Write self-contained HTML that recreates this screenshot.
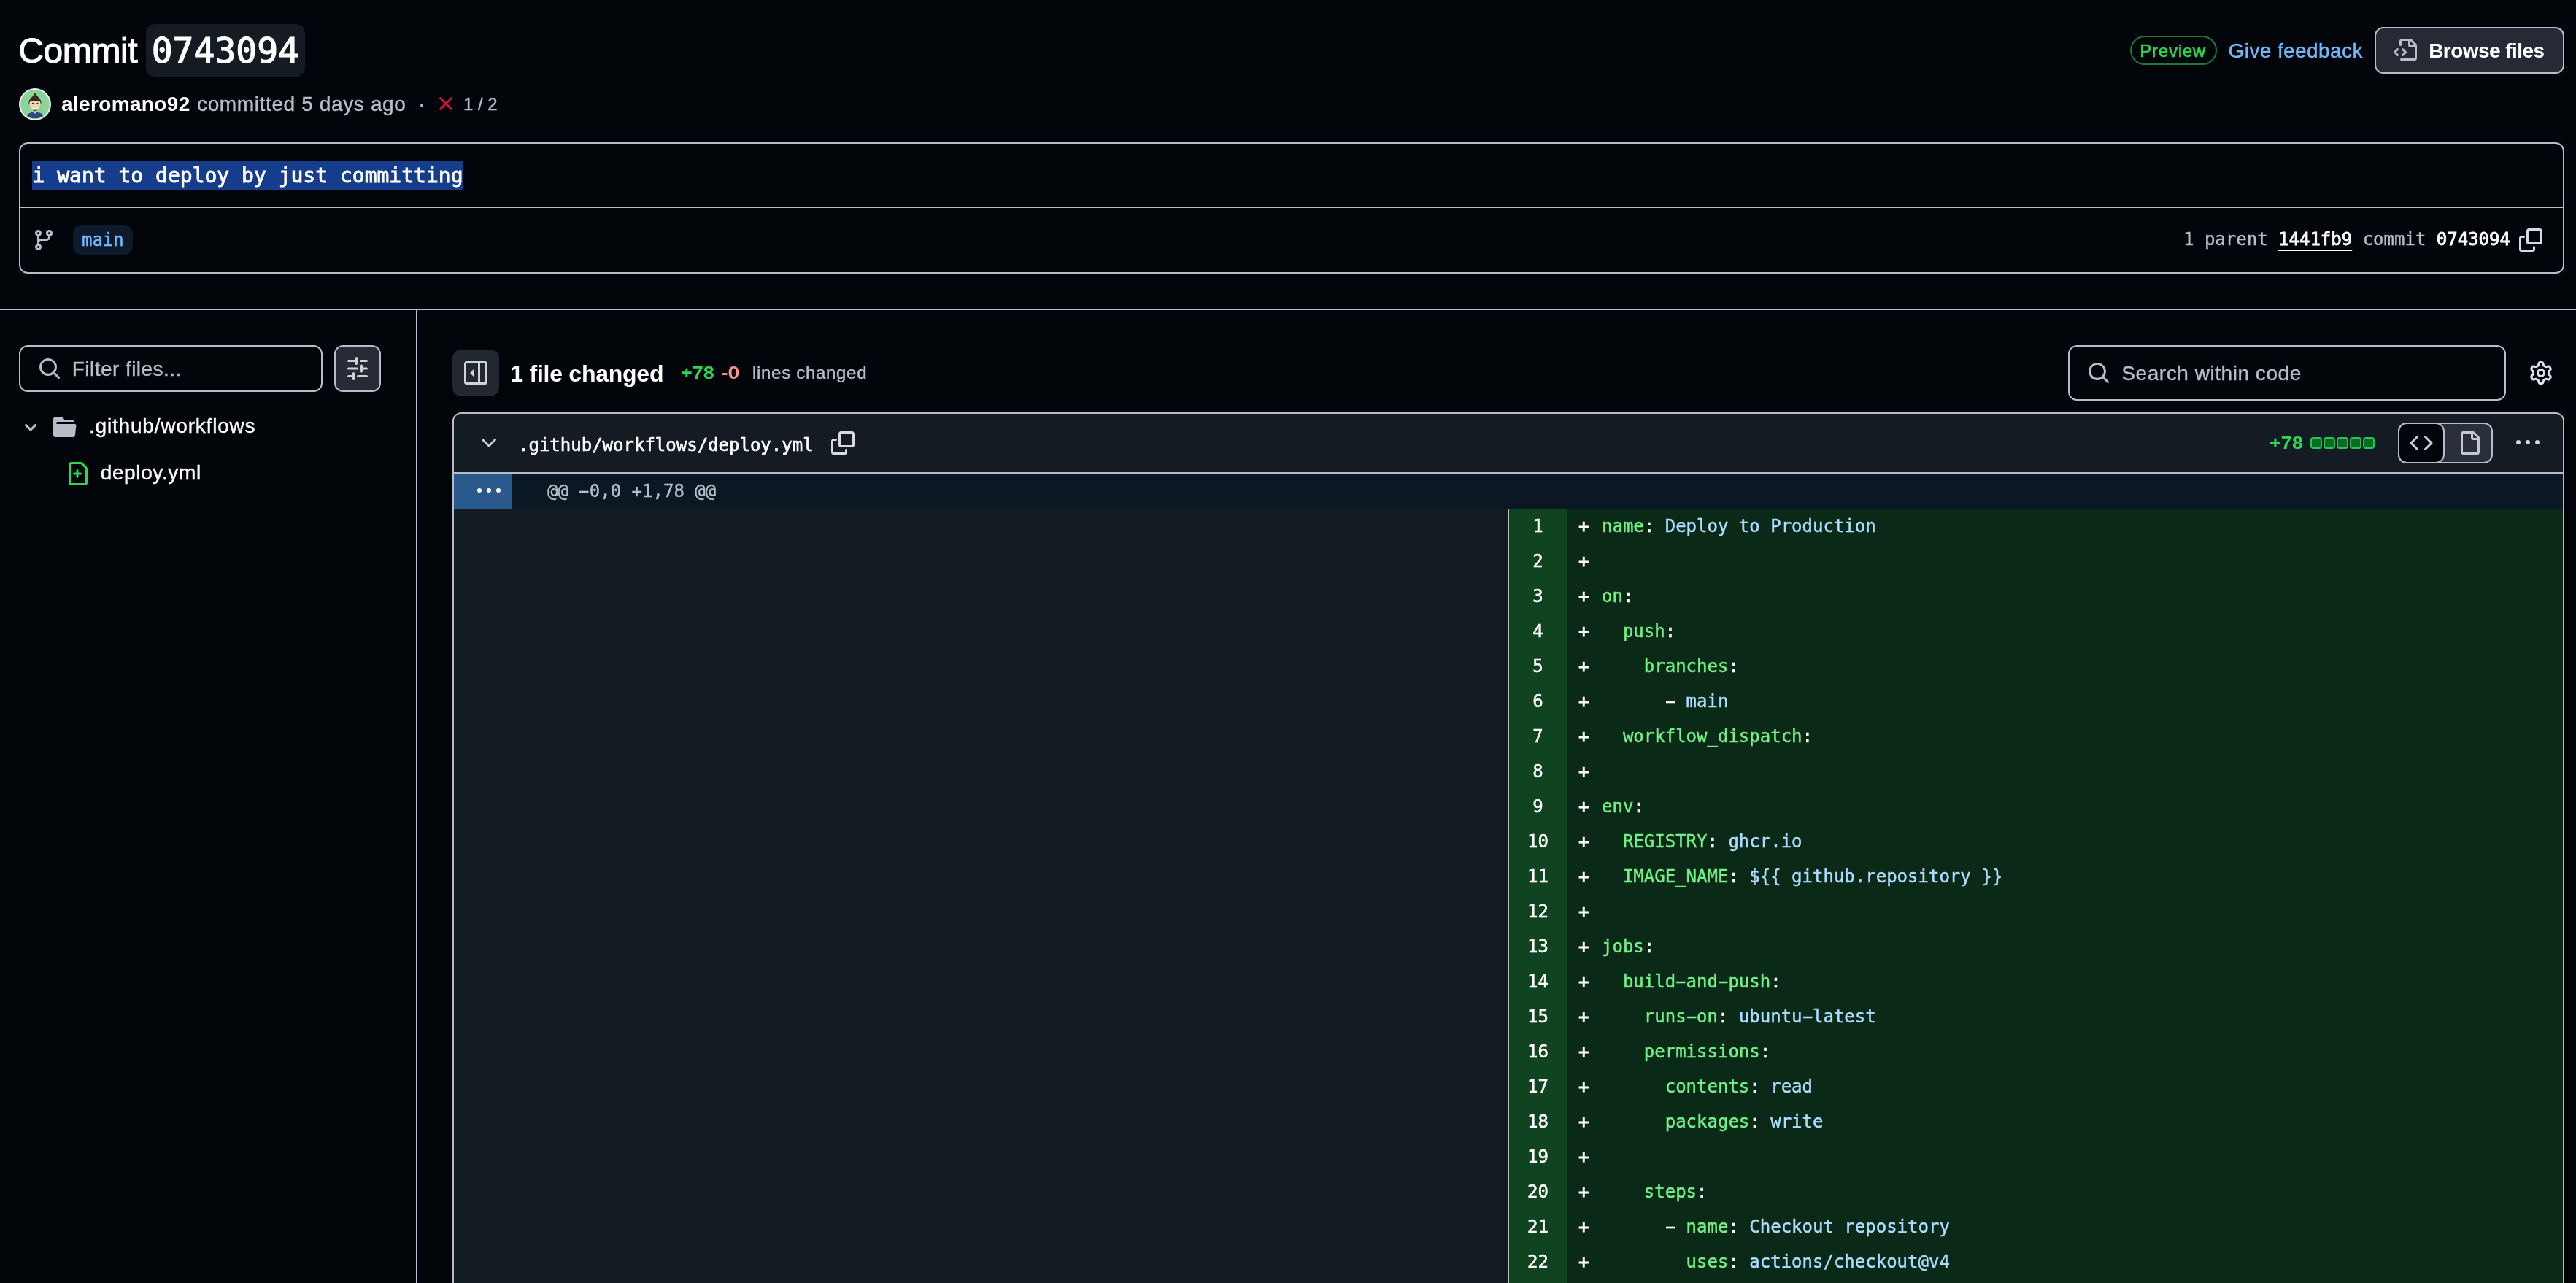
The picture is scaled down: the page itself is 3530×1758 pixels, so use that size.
<!DOCTYPE html>
<html lang="en">
<head>
<meta charset="utf-8">
<title>Commit 0743094</title>
<style>
:root{
  --bg:#010409;
  --muted-bg:#151b23;
  --fg:#ffffff;
  --fg-muted:#b7bdc8;
  --border:#b7bdc8;
  --accent:#74b9ff;
  --green:#2bd853;
  --red:#ff9492;
  --key:#72f088;
  --str:#addcff;
}
*{box-sizing:border-box;margin:0;padding:0}
html,body{width:3530px;height:1758px;overflow:hidden;background:var(--bg)}
body{position:relative;color:var(--fg);font-family:"Liberation Sans",Arial,sans-serif;font-size:28px;-webkit-font-smoothing:antialiased}
#wrap{position:absolute;left:0;top:0;width:3530px;height:1758px;will-change:transform}
.abs{position:absolute}
.t{position:absolute;white-space:nowrap;line-height:1}
.mono{font-family:"DejaVu Sans Mono","Liberation Mono",monospace}
.muted{color:var(--fg-muted)}
svg{position:absolute;display:block;overflow:visible}
b{font-weight:700}

/* ---------- header ---------- */
#h1{left:25.3px;top:45.6px;font-size:48px;font-weight:400;letter-spacing:-0.4px;-webkit-text-stroke:1.1px #fff}
#sha{left:200px;top:33px;width:218px;height:72px;border-radius:12px;background:#151b23}
#shat{left:207.7px;top:44.5px;font-size:48px;-webkit-text-stroke:1.2px #fff}
#avatar{left:26px;top:121px;width:44px;height:44px}
#meta{top:129px;font-size:28px}

#box{left:26px;top:195px;width:3488px;height:180px;border:2px solid var(--border);border-radius:12px}
#boxsep{left:28px;top:283px;width:3484px;height:2px;background:var(--border)}
#sel{left:44px;top:220px;width:590px;height:40px;background:#163c8c}
#msg{left:44.5px;top:226.5px;font-size:28px;font-weight:400;-webkit-text-stroke:0.8px #fff}
#mainbg{left:100px;top:308px;width:82px;height:41px;border-radius:12px;background:#0c1a2c}
#maint{left:112px;top:317px;font-size:24px;color:var(--accent);-webkit-text-stroke-width:0.4px}
#parent{left:2992px;top:316px;font-size:24px;-webkit-text-stroke-width:0.4px}

#hline{left:0;top:423px;width:3530px;height:2px;background:var(--border)}
#vline{left:570px;top:425px;width:2px;height:1333px;background:var(--border)}

/* ---------- sidebar ---------- */
#filter{left:26px;top:473px;width:416px;height:64px;border:2px solid var(--border);border-radius:12px}
#filtert{left:98.8px;top:492px;font-size:28px;color:var(--fg-muted);letter-spacing:0.45px}
#fbtn{left:458px;top:473px;width:64px;height:64px;border:2px solid var(--border);border-radius:12px;background:#262b35}

/* ---------- main top bar ---------- */
#tbtn{left:620px;top:479px;width:64px;height:64px;border-radius:12px;background:#212830}
#fc{left:699.3px;top:495.8px;font-size:32px;font-weight:700;letter-spacing:-0.25px}
#stat{top:499px;font-size:24px}
#search{left:2834px;top:473px;width:600px;height:76px;border:2px solid var(--border);border-radius:12px}
#searcht{left:2907.3px;top:497.7px;font-size:28px;color:var(--fg-muted);letter-spacing:0.55px}

/* ---------- diff ---------- */
#diff{left:620px;top:565px;width:2894px;height:1300px;border:2px solid var(--border);border-radius:12px 12px 0 0;overflow:hidden;background:var(--muted-bg)}
#dhead{left:0;top:0;width:2890px;height:80px;background:var(--muted-bg)}
#dheadsep{left:0;top:80px;width:2890px;height:2px;background:var(--border)}
#hunk{left:0;top:82px;width:2890px;height:48px;background:#0c1724}
#hunknum{left:0;top:82px;width:80px;height:48px;background:#2a5a8d}
#hunkt{left:128px;top:94px;font-size:24px;color:var(--fg-muted);-webkit-text-stroke-width:0.4px}
#split{left:1444px;top:130px;width:2px;height:1200px;background:var(--border)}
#nums{left:1446px;top:130px;width:79px;height:1200px;background:#10431f}
#code{left:1525px;top:130px;width:1365px;height:1200px;background:#0a2917}
.ln{-webkit-text-stroke-width:0.5px;position:absolute;left:1446px;width:79px;height:48px;line-height:48px;text-align:center;font-size:24px;color:#fff}
.mk{-webkit-text-stroke-width:0.8px;position:absolute;left:1541px;height:48px;line-height:48px;font-size:24px;color:#fff}
.cl{-webkit-text-stroke-width:0.45px;position:absolute;left:1573px;height:48px;line-height:48px;font-size:24px;white-space:pre;color:#fff}
.hy{display:inline-block;transform:scaleX(1.9)}
#meta2,#checks,#filtert,#tree1,#tree2,#stat3,#searcht,#feedback{-webkit-text-stroke-width:0.4px}
.k{color:var(--key)}
.s{color:var(--str)}
#fname{left:88px;top:30.5px;font-size:24px;-webkit-text-stroke:0.6px #fff}
#plus78{left:2487.7px;top:28.3px;font-size:24px;font-weight:700;color:var(--green);transform:scaleX(1.13);transform-origin:0 0}
.sq{position:absolute;top:32px;width:16px;height:16px;border-radius:4px;background:#086c25;border:2px solid #28c450}
#seg{left:2664px;top:12px;width:130px;height:56px;border:2px solid var(--border);border-radius:12px;background:#2a303b}
#segsel{left:2664px;top:12px;width:64px;height:56px;border:2px solid var(--border);border-radius:12px;background:var(--bg)}
</style>
</head>
<body>
<div id="wrap">

<!-- header -->
<div class="t" id="h1">Commit</div>
<div class="abs" id="sha"></div>
<div class="t mono" id="shat">0743094</div>

<svg id="avatar" viewBox="0 0 44 44">
  <defs><clipPath id="avc"><circle cx="22" cy="22" r="19.6"/></clipPath></defs>
  <circle cx="22" cy="22" r="22" fill="#e9f6ea"/>
  <circle cx="22" cy="22" r="20" fill="#8fd39c"/>
  <g clip-path="url(#avc)">
    <path d="M10.500 41.500c0-6.500 4.500-9 11.500-9s11.500 2.500 11.500 9z" fill="#2e4a78"/>
    <path d="M19.800 30.500h4.400v2.600l-2.200 1.600-2.200-1.600z" fill="#d5d3ee"/>
    <path d="M19.800 28h4.400v3.200h-4.400z" fill="#5a3a2c"/>
    <path d="M14.600 20c0-4.500 3.200-6.300 7.400-6.300s7.400 1.800 7.400 6.300c0 5.500-3.400 9.600-7.400 9.600s-7.400-4.100-7.400-9.600z" fill="#f6d3b3"/>
    <path d="M16.300 24.500c1.500 1.800 3.500 2.600 5.700 2.600s4.200-.8 5.700-2.600c-.6 3-2.900 5-5.700 5s-5.100-2-5.700-5z" fill="#f3ecdc"/>
    <path d="M13.700 22.500c-1.200-5.800 2.200-9.200 5-11.600l3.300-4.700 3.300 4.700c2.800 2.400 6.200 5.800 5 11.600-.7-3-1.600-4.700-2.800-5.600-1.600.9-3.400 1.200-5.500 1.200s-3.900-.3-5.500-1.200c-1.200.9-2.100 2.600-2.800 5.600z" fill="#3a2a26"/>
    <circle cx="18.900" cy="20.800" r="1" fill="#2a1a14"/>
    <circle cx="25.400" cy="20.800" r="1" fill="#2a1a14"/>
  </g>
</svg>

<div class="t" id="meta" style="left:84px;letter-spacing:0.35px"><b>aleromano92</b></div>
<div class="t muted" id="meta2" style="left:270px;top:129px;font-size:28px;letter-spacing:0.63px">committed 5 days ago</div>
<div class="t muted" id="dot" style="left:573px;top:129px;font-size:28px">·</div>
<svg id="xicon" style="left:595px;top:126px;width:32px;height:32px" viewBox="0 0 16 16"><path fill="#cb1634" d="M3.72 3.72a.75.75 0 0 1 1.06 0L8 6.94l3.22-3.22a.749.749 0 0 1 1.275.326.749.749 0 0 1-.215.734L9.06 8l3.22 3.22a.749.749 0 0 1-.326 1.275.749.749 0 0 1-.734-.215L8 9.06l-3.22 3.22a.751.751 0 0 1-1.042-.018.751.751 0 0 1-.018-1.042L6.94 8 3.72 4.78a.75.75 0 0 1 0-1.06Z"/></svg>
<div class="t muted" id="checks" style="left:635px;top:131px;font-size:24px">1 / 2</div>


<div class="abs" id="pill" style="left:2919px;top:49px;width:119px;height:40px;border:2px solid #197b35;border-radius:20px"></div>
<div class="t" id="pillt" style="left:2932.3px;top:57.5px;letter-spacing:0.75px;font-size:24px;color:var(--green);-webkit-text-stroke:0.6px var(--green)">Preview</div>
<div class="t" id="feedback" style="left:3053.6px;top:55.6px;font-size:28px;color:var(--accent);letter-spacing:0.4px">Give feedback</div>
<div class="abs" id="bbtn" style="left:3254px;top:37px;width:260px;height:64px;border:2px solid var(--border);border-radius:12px;background:#252a34"></div>
<svg id="bicon" style="left:3280px;top:53px;width:32px;height:32px" viewBox="0 0 16 16"><path fill="#b7bdc8" d="M4 1.750C4 .784 4.784 0 5.750 0h5.586c.464 0 .909.184 1.237.513l2.914 2.914c.329.328.513.773.513 1.237v8.586A1.750 1.750 0 0 1 14.250 15h-9a.75.75 0 0 1 0-1.500h9a.25.25 0 0 0 .25-.25V6h-2.750A1.750 1.750 0 0 1 10 4.250V1.500H5.750a.25.25 0 0 0-.25.25v2.500a.75.75 0 0 1-1.500 0Zm1.720 4.970a.75.75 0 0 1 1.060 0l2 2a.75.75 0 0 1 0 1.060l-2 2a.749.749 0 0 1-1.275-.326.749.749 0 0 1 .215-.734l1.470-1.470-1.470-1.470a.75.75 0 0 1 0-1.060ZM3.280 7.780 1.810 9.250l1.470 1.470a.751.751 0 0 1-.018 1.042.751.751 0 0 1-1.042.018l-2-2a.75.75 0 0 1 0-1.060l2-2a.751.751 0 0 1 1.042.018.751.751 0 0 1 .018 1.042Zm8.220-6.218V4.250c0 .138.112.25.25.25h2.688l-.011-.013-2.914-2.914-.013-.011Z"/></svg>
<div class="t" id="bbtnt" style="left:3328.2px;top:55.6px;font-size:28px;font-weight:700;letter-spacing:-0.55px">Browse files</div>

<div class="abs" id="box"></div>
<div class="abs" id="boxsep"></div>
<div class="abs" id="sel"></div>
<div class="t mono" id="msg">i want to deploy by just committing</div>

<svg id="branch" style="left:44px;top:313px;width:32px;height:32px" viewBox="0 0 16 16"><path fill="#b7bdc8" d="M9.5 3.25a2.25 2.25 0 1 1 3 2.122V6A2.5 2.5 0 0 1 10 8.5H6a1 1 0 0 0-1 1v1.128a2.251 2.251 0 1 1-1.5 0V5.372a2.25 2.25 0 1 1 1.5 0v1.836A2.493 2.493 0 0 1 6 7h4a1 1 0 0 0 1-1v-.628A2.25 2.25 0 0 1 9.5 3.25Zm-6 0a.75.75 0 1 0 1.5 0 .75.75 0 0 0-1.5 0Zm8.25-.75a.75.75 0 1 0 0 1.5.75.75 0 0 0 0-1.5ZM4.25 12a.75.75 0 1 0 0 1.5.75.75 0 0 0 0-1.5Z"/></svg>
<div class="abs" id="mainbg"></div>
<div class="t mono" id="maint">main</div>

<div class="t mono" id="parent"><span class="muted">1 parent </span><span style="text-decoration:underline;text-underline-offset:6px;text-decoration-thickness:2px;-webkit-text-stroke-width:0.8px">1441fb9</span><span class="muted"> commit </span><span style="-webkit-text-stroke-width:0.8px">0743094</span></div>
<svg id="copy1" style="left:3452px;top:313px;width:32px;height:32px" viewBox="0 0 16 16"><path fill="#d6dbe3" d="M0 6.75C0 5.784.784 5 1.75 5h1.5a.75.75 0 0 1 0 1.5h-1.5a.25.25 0 0 0-.25.25v7.5c0 .138.112.25.25.25h7.5a.25.25 0 0 0 .25-.25v-1.5a.75.75 0 0 1 1.5 0v1.5A1.75 1.75 0 0 1 9.25 16h-7.5A1.75 1.75 0 0 1 0 14.25Z"/><path fill="#d6dbe3" d="M5 1.75C5 .784 5.784 0 6.75 0h7.5C15.216 0 16 .784 16 1.75v7.5A1.75 1.75 0 0 1 14.25 11h-7.5A1.75 1.75 0 0 1 5 9.25Zm1.75-.25a.25.25 0 0 0-.25.25v7.5c0 .138.112.25.25.25h7.5a.25.25 0 0 0 .25-.25v-7.5a.25.25 0 0 0-.25-.25Z"/></svg>

<div class="abs" id="hline"></div>
<div class="abs" id="vline"></div>


<!-- sidebar -->
<div class="abs" id="filter"></div>
<svg id="fsearch" style="left:52px;top:489px;width:32px;height:32px" viewBox="0 0 16 16"><path fill="#b7bdc8" d="M10.68 11.74a6 6 0 0 1-7.922-8.982 6 6 0 0 1 8.982 7.922l3.04 3.04a.749.749 0 0 1-.326 1.275.749.749 0 0 1-.734-.215ZM11.5 7a4.499 4.499 0 1 0-8.997 0A4.499 4.499 0 0 0 11.5 7Z"/></svg>
<div class="t" id="filtert">Filter files...</div>
<div class="abs" id="fbtn"></div>
<svg id="fbtni" style="left:474px;top:489px;width:32px;height:32px" viewBox="0 0 16 16"><path fill="#ced3db" d="M15 2.75a.75.75 0 0 1-.75.75h-4a.75.75 0 0 1 0-1.500h4a.75.75 0 0 1 .75.75Zm-8.5.75v1.250a.75.75 0 0 0 1.500 0v-4a.75.75 0 0 0-1.500 0V2H1.750a.75.75 0 0 0 0 1.500H6.500Zm1.250 5.250a.75.75 0 0 0 0-1.500h-6a.75.75 0 0 0 0 1.500h6ZM15 8a.75.75 0 0 1-.75.75H11.500V10a.75.75 0 1 1-1.500 0V6a.75.75 0 0 1 1.500 0v1.250h2.750A.75.75 0 0 1 15 8Zm-9 5.250v-2a.75.75 0 0 0-1.500 0v1.250H1.750a.75.75 0 0 0 0 1.500H4.500v1.250a.75.75 0 0 0 1.500 0v-2Zm9 0a.75.75 0 0 1-.75.75h-6a.75.75 0 0 1 0-1.500h6a.75.75 0 0 1 .75.75Z"/></svg>

<svg id="chev1" style="left:30px;top:573px;width:24px;height:24px" viewBox="0 0 12 12"><path fill="#b7bdc8" d="M6 8.825c-.2 0-.4-.1-.5-.2l-3.300-3.300c-.3-.3-.3-.8 0-1.100.3-.3.800-.3 1.100 0l2.700 2.700 2.700-2.700c.3-.3.800-.3 1.100 0 .3.300.3.800 0 1.100l-3.200 3.200c-.2.200-.4.300-.6.300Z"/></svg>
<svg id="folder" style="left:73px;top:569px;width:32px;height:32px" viewBox="0 0 16 16"><path fill="#b7bdc8" d="M.513 1.513A1.750 1.750 0 0 1 1.750 1h3.500c.55 0 1.070.26 1.400.7l.9 1.200a.25.25 0 0 0 .2.100H13a1 1 0 0 1 1 1v.5H2.750a.75.75 0 0 0 0 1.500h11.978a1 1 0 0 1 .994 1.117L15 13.250A1.750 1.750 0 0 1 13.250 15H1.750A1.750 1.750 0 0 1 0 13.250V2.750c0-.464.184-.910.513-1.237Z"/></svg>
<div class="t" id="tree1" style="left:122px;top:570.2px;font-size:28px;letter-spacing:0.8px">.github/workflows</div>
<svg id="fileadd" style="left:90.3px;top:633px;width:32px;height:32px" viewBox="0 0 16 16"><path fill="#2bd853" d="M2 1.750C2 .784 2.784 0 3.750 0h6.586c.464 0 .909.184 1.237.513l2.914 2.914c.329.328.513.773.513 1.237v9.586A1.750 1.750 0 0 1 13.250 16h-9.500A1.750 1.750 0 0 1 2 14.250Zm1.750-.25a.25.25 0 0 0-.25.25v12.500c0 .138.112.25.25.25h9.500a.25.25 0 0 0 .25-.25V4.664a.25.25 0 0 0-.073-.177l-2.914-2.914a.25.25 0 0 0-.177-.073ZM8 5a.75.75 0 0 1 .75.75v1.500h1.500a.75.75 0 0 1 0 1.500h-1.500v1.500a.75.75 0 0 1-1.500 0v-1.500h-1.500a.75.75 0 0 1 0-1.500h1.500v-1.500A.75.75 0 0 1 8 5Z"/></svg>
<div class="t" id="tree2" style="left:137.7px;top:634.2px;font-size:28px;letter-spacing:0.63px">deploy.yml</div>

<!-- main top bar -->
<div class="abs" id="tbtn"></div>
<svg id="tbtni" style="left:636px;top:495px;width:32px;height:32px" viewBox="0 0 16 16"><path fill="#ced3db" d="m4.177 7.823 2.396-2.396A.25.25 0 0 1 7 5.604v4.792a.25.25 0 0 1-.427.177L4.177 8.177a.25.25 0 0 1 0-.354Z"/><path fill="#ced3db" d="M0 1.750C0 .784.784 0 1.750 0h12.500C15.216 0 16 .784 16 1.750v12.500A1.750 1.750 0 0 1 14.250 16H1.750A1.750 1.750 0 0 1 0 14.250Zm1.750-.25a.25.25 0 0 0-.25.25v12.500c0 .138.112.25.25.25H9.500v-13Zm12.500 13a.25.250 0 0 0 .25-.25V1.750a.25.25 0 0 0-.25-.25H11v13Z"/></svg>
<div class="t" id="fc">1 file changed</div>
<div class="t" id="stat" style="left:933px;color:var(--green);font-weight:700;transform:scaleX(1.123);transform-origin:0 0">+78</div>
<div class="t" id="stat2" style="left:988px;top:499px;font-size:24px;color:var(--red);font-weight:700;transform:scaleX(1.19);transform-origin:0 0">-0</div>
<div class="t muted" id="stat3" style="left:1031px;top:499px;font-size:24px;letter-spacing:0.7px">lines changed</div>
<div class="abs" id="search"></div>
<svg id="ssearch" style="left:2860px;top:495px;width:32px;height:32px" viewBox="0 0 16 16"><path fill="#b7bdc8" d="M10.68 11.74a6 6 0 0 1-7.922-8.982 6 6 0 0 1 8.982 7.922l3.04 3.04a.749.749 0 0 1-.326 1.275.749.749 0 0 1-.734-.215ZM11.5 7a4.499 4.499 0 1 0-8.997 0A4.499 4.499 0 0 0 11.5 7Z"/></svg>
<div class="t" id="searcht">Search within code</div>
<svg id="gear" style="left:3466px;top:495px;width:32px;height:32px" viewBox="0 0 16 16"><path fill="#dde1e8" d="M8 0a8.200 8.200 0 0 1 .701.031C9.444.095 9.990.645 10.160 1.290l.288 1.107c.018.066.079.158.212.224.231.114.454.243.668.386.123.082.233.090.299.071l1.103-.303c.644-.176 1.392.021 1.820.630.270.385.506.792.704 1.218.315.675.111 1.422-.364 1.891l-.814.806c-.049.048-.098.147-.088.294.016.257.016.515 0 .772-.01.147.038.246.088.294l.814.806c.475.469.679 1.216.364 1.891a7.977 7.977 0 0 1-.704 1.217c-.428.610-1.176.807-1.820.630l-1.102-.302c-.067-.019-.177-.011-.300.071a5.909 5.909 0 0 1-.668.386c-.133.066-.194.158-.211.224l-.290 1.106c-.168.646-.715 1.196-1.458 1.260a8.006 8.006 0 0 1-1.402 0c-.743-.064-1.289-.614-1.458-1.260l-.289-1.106c-.018-.066-.079-.158-.212-.224a5.738 5.738 0 0 1-.668-.386c-.123-.082-.233-.090-.299-.071l-1.103.303c-.644.176-1.392-.021-1.820-.630a8.120 8.120 0 0 1-.704-1.218c-.315-.675-.111-1.422.363-1.891l.815-.806c.050-.048.098-.147.088-.294a6.214 6.214 0 0 1 0-.772c.010-.147-.038-.246-.088-.294l-.815-.806C.635 6.045.431 5.298.746 4.623a7.920 7.920 0 0 1 .704-1.217c.428-.610 1.176-.807 1.820-.630l1.102.302c.067.019.177.011.300-.071.214-.143.437-.272.668-.386.133-.066.194-.158.211-.224l.290-1.106C6.009.645 6.556.095 7.299.030 7.530.010 7.764 0 8 0Zm-.571 1.525c-.036.003-.108.036-.137.146l-.289 1.105c-.147.561-.549.967-.998 1.189-.173.086-.340.183-.500.290-.417.278-.970.423-1.529.270l-1.103-.303c-.109-.030-.175.016-.195.045-.220.312-.412.644-.573.990-.014.031-.021.110.059.190l.815.806c.411.406.562.957.530 1.456a4.709 4.709 0 0 0 0 .582c.032.499-.119 1.050-.530 1.456l-.815.806c-.081.080-.073.159-.059.190.162.346.353.677.573.989.020.030.085.076.195.046l1.102-.303c.560-.153 1.113-.008 1.530.270.161.107.328.204.501.290.447.222.850.629.997 1.189l.289 1.105c.029.109.101.143.137.146a6.600 6.600 0 0 0 1.142 0c.036-.003.108-.036.137-.146l.289-1.105c.147-.561.549-.967.998-1.189.173-.086.340-.183.500-.290.417-.278.970-.423 1.529-.270l1.103.303c.109.029.175-.016.195-.045.220-.313.411-.644.573-.990.014-.031.021-.110-.059-.190l-.815-.806c-.411-.406-.562-.957-.530-1.456a4.709 4.709 0 0 0 0-.582c-.032-.499.119-1.050.530-1.456l.815-.806c.081-.080.073-.159.059-.190a6.464 6.464 0 0 0-.573-.989c-.020-.030-.085-.076-.195-.046l-1.102.303c-.560.153-1.113.008-1.530-.270a4.440 4.440 0 0 0-.501-.290c-.447-.222-.850-.629-.997-1.189l-.289-1.105c-.029-.110-.101-.143-.137-.146a6.600 6.600 0 0 0-1.142 0ZM11 8a3 3 0 1 1-6 0 3 3 0 0 1 6 0ZM9.500 8a1.500 1.500 0 1 0-3.001.001A1.500 1.500 0 0 0 9.500 8Z"/></svg>

<!-- diff -->
<div class="abs" id="diff">
  <div class="abs" id="dhead"></div>
  <div class="abs" id="dheadsep"></div>
  <svg id="chev2" style="left:31.7px;top:24px;width:32px;height:32px" viewBox="0 0 16 16"><path fill="#c9ced6" d="M12.780 5.220a.749.749 0 0 1 0 1.060l-4.250 4.250a.749.749 0 0 1-1.060 0L3.220 6.280a.749.749 0 1 1 1.060-1.060L8 8.939l3.720-3.719a.749.749 0 0 1 1.060 0Z"/></svg>
  <div class="t mono" id="fname">.github/workflows/deploy.yml</div>
  <svg id="copy2" style="left:517px;top:24px;width:32px;height:32px" viewBox="0 0 16 16"><path fill="#d6dbe3" d="M0 6.750C0 5.784.784 5 1.750 5h1.500a.75.75 0 0 1 0 1.500h-1.500a.25.25 0 0 0-.25.25v7.500c0 .138.112.25.25.25h7.500a.25.25 0 0 0 .25-.25v-1.500a.75.75 0 0 1 1.500 0v1.500A1.750 1.750 0 0 1 9.250 16h-7.500A1.750 1.750 0 0 1 0 14.250Z"/><path fill="#d6dbe3" d="M5 1.750C5 .784 5.784 0 6.750 0h7.500C15.216 0 16 .784 16 1.750v7.500A1.750 1.750 0 0 1 14.250 11h-7.500A1.750 1.750 0 0 1 5 9.250Zm1.750-.25a.25.25 0 0 0-.25.25v7.500c0 .138.112.25.25.25h7.500a.25.25 0 0 0 .25-.25v-7.500a.25.25 0 0 0-.25-.25Z"/></svg>
  <div class="t" id="plus78">+78</div>
  <div class="sq" style="left:2544px"></div><div class="sq" style="left:2562px"></div><div class="sq" style="left:2580px"></div><div class="sq" style="left:2598px"></div><div class="sq" style="left:2616px"></div>
  <div class="abs" id="seg"></div>
  <div class="abs" id="segsel"></div>
  <svg id="codei" style="left:2679.5px;top:24px;width:32px;height:32px" viewBox="0 0 16 16"><path fill="#c9ced6" d="m11.280 3.220 4.250 4.250a.75.75 0 0 1 0 1.060l-4.250 4.250a.749.749 0 0 1-1.275-.326.749.749 0 0 1 .215-.734L13.940 8l-3.720-3.720a.749.749 0 0 1 .326-1.275.749.749 0 0 1 .734.215Zm-6.560 0a.751.751 0 0 1 1.042.018.751.751 0 0 1 .018 1.042L2.060 8l3.720 3.720a.749.749 0 0 1-.326 1.275.749.749 0 0 1-.734-.215L.470 8.530a.75.75 0 0 1 0-1.060Z"/></svg>
  <svg id="filei" style="left:2746px;top:24px;width:32px;height:32px" viewBox="0 0 16 16"><path fill="#c3c8d1" d="M2 1.750C2 .784 2.784 0 3.750 0h6.586c.464 0 .909.184 1.237.513l2.914 2.914c.329.328.513.773.513 1.237v9.586A1.750 1.750 0 0 1 13.250 16h-9.500A1.750 1.750 0 0 1 2 14.250Zm1.750-.25a.25.25 0 0 0-.25.25v12.500c0 .138.112.25.25.25h9.500a.25.25 0 0 0 .25-.25V6h-2.750A1.750 1.750 0 0 1 9 4.250V1.500Zm6.750.062V4.250c0 .138.112.25.25.25h2.688l-.011-.013-2.914-2.914-.013-.011Z"/></svg>
  <svg id="kebab" style="left:2826px;top:24px;width:32px;height:32px" viewBox="0 0 16 16"><path fill="#d5dae2" d="M8 9a1.500 1.500 0 1 0 0-3 1.500 1.500 0 0 0 0 3ZM1.500 9a1.500 1.500 0 1 0 0-3 1.500 1.500 0 0 0 0 3Zm13 0a1.500 1.500 0 1 0 0-3 1.500 1.500 0 0 0 0 3Z"/></svg>

  <div class="abs" id="hunk"></div>
  <div class="abs" id="hunknum"></div>
  <svg id="hdots" style="left:32px;top:90px;width:32px;height:32px" viewBox="0 0 16 16"><path fill="#fff" d="M8 9a1.500 1.500 0 1 0 0-3 1.500 1.500 0 0 0 0 3ZM1.500 9a1.500 1.500 0 1 0 0-3 1.500 1.500 0 0 0 0 3Zm13 0a1.500 1.500 0 1 0 0-3 1.500 1.500 0 0 0 0 3Z"/></svg>
  <div class="t mono" id="hunkt">@@ <span class="hy">-</span>0,0 +1,78 @@</div>

  <div class="abs" id="split"></div>
  <div class="abs" id="nums"></div>
  <div class="abs" id="code"></div>
<div class="ln mono" style="top:130px">1</div><div class="mk mono" style="top:130px">+</div><div class="cl mono" style="top:130px"><span class="k">name</span>: <span class="s">Deploy to Production</span></div>
  <div class="ln mono" style="top:178px">2</div><div class="mk mono" style="top:178px">+</div><div class="cl mono" style="top:178px"></div>
  <div class="ln mono" style="top:226px">3</div><div class="mk mono" style="top:226px">+</div><div class="cl mono" style="top:226px"><span class="k">on</span>:</div>
  <div class="ln mono" style="top:274px">4</div><div class="mk mono" style="top:274px">+</div><div class="cl mono" style="top:274px">  <span class="k">push</span>:</div>
  <div class="ln mono" style="top:322px">5</div><div class="mk mono" style="top:322px">+</div><div class="cl mono" style="top:322px">    <span class="k">branches</span>:</div>
  <div class="ln mono" style="top:370px">6</div><div class="mk mono" style="top:370px">+</div><div class="cl mono" style="top:370px">      <span class="hy">-</span> <span class="s">main</span></div>
  <div class="ln mono" style="top:418px">7</div><div class="mk mono" style="top:418px">+</div><div class="cl mono" style="top:418px">  <span class="k">workflow_dispatch</span>:</div>
  <div class="ln mono" style="top:466px">8</div><div class="mk mono" style="top:466px">+</div><div class="cl mono" style="top:466px"></div>
  <div class="ln mono" style="top:514px">9</div><div class="mk mono" style="top:514px">+</div><div class="cl mono" style="top:514px"><span class="k">env</span>:</div>
  <div class="ln mono" style="top:562px">10</div><div class="mk mono" style="top:562px">+</div><div class="cl mono" style="top:562px">  <span class="k">REGISTRY</span>: <span class="s">ghcr.io</span></div>
  <div class="ln mono" style="top:610px">11</div><div class="mk mono" style="top:610px">+</div><div class="cl mono" style="top:610px">  <span class="k">IMAGE_NAME</span>: <span class="s">${{ github.repository }}</span></div>
  <div class="ln mono" style="top:658px">12</div><div class="mk mono" style="top:658px">+</div><div class="cl mono" style="top:658px"></div>
  <div class="ln mono" style="top:706px">13</div><div class="mk mono" style="top:706px">+</div><div class="cl mono" style="top:706px"><span class="k">jobs</span>:</div>
  <div class="ln mono" style="top:754px">14</div><div class="mk mono" style="top:754px">+</div><div class="cl mono" style="top:754px">  <span class="k">build<span class="hy">-</span>and<span class="hy">-</span>push</span>:</div>
  <div class="ln mono" style="top:802px">15</div><div class="mk mono" style="top:802px">+</div><div class="cl mono" style="top:802px">    <span class="k">runs<span class="hy">-</span>on</span>: <span class="s">ubuntu<span class="hy">-</span>latest</span></div>
  <div class="ln mono" style="top:850px">16</div><div class="mk mono" style="top:850px">+</div><div class="cl mono" style="top:850px">    <span class="k">permissions</span>:</div>
  <div class="ln mono" style="top:898px">17</div><div class="mk mono" style="top:898px">+</div><div class="cl mono" style="top:898px">      <span class="k">contents</span>: <span class="s">read</span></div>
  <div class="ln mono" style="top:946px">18</div><div class="mk mono" style="top:946px">+</div><div class="cl mono" style="top:946px">      <span class="k">packages</span>: <span class="s">write</span></div>
  <div class="ln mono" style="top:994px">19</div><div class="mk mono" style="top:994px">+</div><div class="cl mono" style="top:994px"></div>
  <div class="ln mono" style="top:1042px">20</div><div class="mk mono" style="top:1042px">+</div><div class="cl mono" style="top:1042px">    <span class="k">steps</span>:</div>
  <div class="ln mono" style="top:1090px">21</div><div class="mk mono" style="top:1090px">+</div><div class="cl mono" style="top:1090px">      <span class="hy">-</span> <span class="k">name</span>: <span class="s">Checkout repository</span></div>
  <div class="ln mono" style="top:1138px">22</div><div class="mk mono" style="top:1138px">+</div><div class="cl mono" style="top:1138px">        <span class="k">uses</span>: <span class="s">actions/checkout@v4</span></div>
</div>

</div>
</body>
</html>
